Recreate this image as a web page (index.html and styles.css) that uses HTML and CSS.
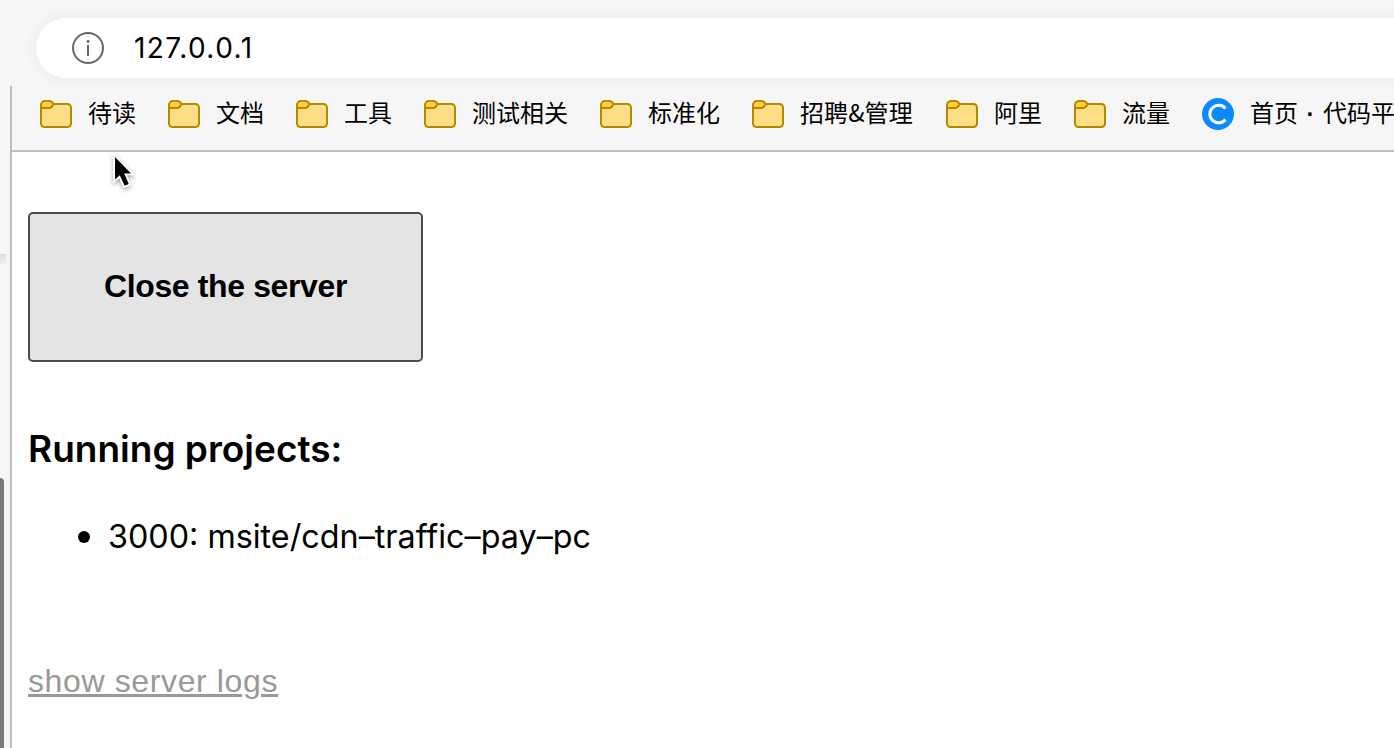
FILE: index.html
```html
<!DOCTYPE html>
<html lang="zh-CN">
<head>
<meta charset="utf-8">
<title>127.0.0.1</title>
<link rel="stylesheet" href="styles.css">
</head>
<body>
<svg class="defs" width="0" height="0">
  <symbol id="folder" viewBox="0 0 32 28">
    <path d="M1 5v18.500A3.500 3.500 0 0 0 4.500 27h23a3.500 3.500 0 0 0 3.500-3.500v-16A3.500 3.500 0 0 0 27.500 4H14L11.500 1.700A3 3 0 0 0 9.700 1H5a4 4 0 0 0-4 4z" fill="#ffdf85"/>
    <path d="M1 8V5a4 4 0 0 1 4-4h4.700a3 3 0 0 1 1.800.7L14 4l-2.700 3.100A2.500 2.500 0 0 1 9.400 8z" fill="#ffcf3d"/>
    <path d="M1 5v18.500A3.500 3.500 0 0 0 4.500 27h23a3.500 3.500 0 0 0 3.500-3.500v-16A3.500 3.500 0 0 0 27.500 4H14L11.500 1.700A3 3 0 0 0 9.700 1H5a4 4 0 0 0-4 4zM1 8h8.400a2.500 2.500 0 0 0 1.900-.9L14 4" fill="none" stroke="#b88700" stroke-width="2"/>
  </symbol>
</svg>
<header class="toolbar">
  <div class="address">
    <svg class="info" viewBox="0 0 32 32"><circle cx="16" cy="16" r="15" fill="none" stroke="#666" stroke-width="2"/><path d="M16 13v11" stroke="#666" stroke-width="2"/><circle cx="16" cy="9.300" r="1.500" fill="#666"/></svg>
    <span class="url">127.0.0.1</span>
  </div>
</header>
<div class="window">
  <aside class="edge"><div class="edge-shadow"></div><div class="edge-thumb"></div></aside>
  <div class="frame">
    <nav class="bookmarks">
      <a class="bookmark"><svg class="folder"><use href="#folder"/></svg><span>待读</span></a>
      <a class="bookmark"><svg class="folder"><use href="#folder"/></svg><span>文档</span></a>
      <a class="bookmark"><svg class="folder"><use href="#folder"/></svg><span>工具</span></a>
      <a class="bookmark"><svg class="folder"><use href="#folder"/></svg><span>测试相关</span></a>
      <a class="bookmark"><svg class="folder"><use href="#folder"/></svg><span>标准化</span></a>
      <a class="bookmark manage"><svg class="folder"><use href="#folder"/></svg><span>招聘&amp;管理</span></a>
      <a class="bookmark"><svg class="folder"><use href="#folder"/></svg><span>阿里</span></a>
      <a class="bookmark"><svg class="folder"><use href="#folder"/></svg><span>流量</span></a>
      <a class="bookmark"><svg class="site" viewBox="0 0 32 32"><circle cx="16" cy="16" r="16" fill="#0a8aff"/><path d="M23.500 10.500A8.800 8.800 0 1 0 23.500 21.500" fill="none" stroke="#fff" stroke-width="3"/></svg><span>首页<i class="dot">·</i>代码平</span></a>
    </nav>
    <main class="page">
      <button class="close">Close the server</button>
      <h3 class="title">Running projects:</h3>
      <ul class="projects"><li>3000: msite/cdn–traffic–pay–pc</li></ul>
      <a class="logs">show server logs</a>
    </main>
  </div>
</div>
<svg class="cursor" viewBox="0 0 32 44"><path d="M7 6v22.500l4.800-4.300 4.800 10.600 4.200-1.900-4.600-10.400h6.800z" fill="#000" stroke="#fff" stroke-width="3.600" paint-order="stroke"/></svg>
</body>
</html>
```
FILE: styles.css
```css
* { box-sizing: border-box; }
body {
  margin: 0;
  width: 1394px;
  height: 748px;
  overflow: hidden;
  display: flex;
  flex-direction: column;
  background: #f6f6f6;
  color: #000;
  font-family: Inter, "Noto Sans CJK SC", sans-serif;
}
.defs { position: absolute; }
.toolbar { height: 86px; flex: none; padding: 18px 0 0 36px; overflow: hidden; }
.address {
  height: 60px;
  padding-left: 36px;
  display: flex;
  align-items: center;
  gap: 30px;
  background: #fff;
  border-radius: 30px 0 0 30px;
  box-shadow: 0 0 16px rgba(0, 0, 0, .06);
}
.info { width: 32px; height: 32px; }
.url { font-size: 28px; line-height: 32px; padding-bottom: 1px; letter-spacing: 1.450px; }
.window { flex: 1; display: flex; min-height: 0; }
.edge { width: 10px; flex: none; display: flex; flex-direction: column; }
.edge-shadow { width: 6px; height: 12px; margin-top: 168px; background: linear-gradient(#dcdcdc, #f6f6f6); }
.edge-thumb { width: 4px; flex: 1; margin-top: 212px; background: #7b7a79; border-top-right-radius: 4px; }
.frame { flex: 1; min-width: 0; border-left: 2px solid #bebebe; background: #fff; }
.bookmarks {
  height: 66px;
  padding: 10px 0 0 28px;
  display: flex;
  align-items: flex-start;
  gap: 32px;
  overflow: hidden;
  background: #f6f6f6;
  border-bottom: 2px solid #bebebe;
}
.bookmark { flex: none; display: flex; align-items: center; gap: 16px; height: 36px; font: 24px/36px "Noto Sans CJK SC", sans-serif; white-space: nowrap; }
.bookmark span { height: 36px; margin-top: -5px; }
.manage span { width: 114px; letter-spacing: .1px; }
.folder { width: 32px; height: 28px; }
.site { width: 32px; height: 32px; }
.dot { display: inline-block; width: 25px; text-align: center; font-style: normal; font-family: "Liberation Sans", sans-serif; font-weight: bold; }
.page { padding: 60px 16px 0; display: flex; flex-direction: column; align-items: flex-start; }
.close {
  width: 395px;
  height: 150px;
  padding: 0 0 2px;
  border: 2px solid #4c4c4c;
  border-radius: 5px;
  background: #e4e4e4;
  color: #000;
  font: bold 32px/36px "Liberation Sans", sans-serif;
  letter-spacing: -.38px;
}
.title { margin: 64px 0 0; font: 600 37px/46px Inter, sans-serif; }
.projects { margin: 41px 0 0; padding-left: 80px; font-size: 32.300px; line-height: 44px; }
.projects li::marker { font-size: 36px; }
.logs { margin-top: 100px; font: 32px/44px "Liberation Sans", sans-serif; color: #999; text-decoration: underline; text-decoration-thickness: 3px; text-underline-offset: 2px; letter-spacing: .62px; }
.cursor { position: absolute; left: 108px; top: 151px; width: 32px; height: 44px; filter: drop-shadow(0 2px 2px rgba(0, 0, 0, .35)); }
```
